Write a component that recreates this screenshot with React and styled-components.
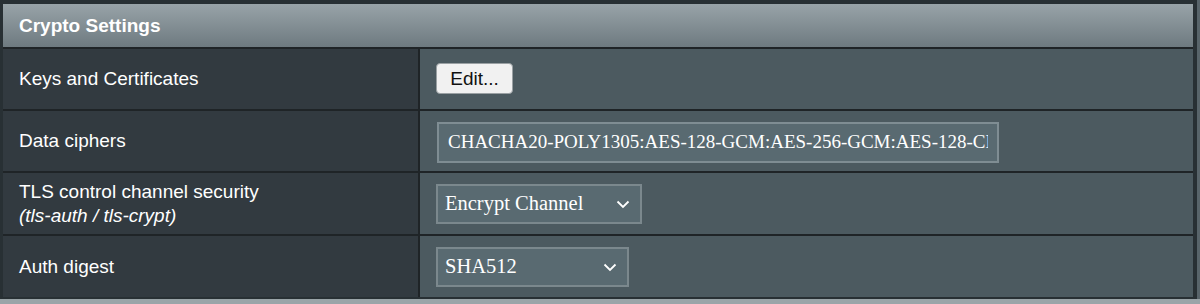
import styled, { createGlobalStyle } from 'styled-components';

const GlobalStyle = createGlobalStyle`
	html, body {
		margin: 0;
		padding: 0;
		background: #9aa4a8;
	}
	body {
		font-family: 'Liberation Sans', Arial, sans-serif;
	}
`;

const Frame = styled.div`
	width: 1200px;
	height: 304px;
	background: #9aa4a8;
	overflow: hidden;
`;

const Panel = styled.div`
	width: 1200px;
	padding: 4px 4px 2px 3px;
	box-sizing: border-box;
	background: #283034;
	border-right: 3px solid #58646a;
`;

const Table = styled.div`
	display: grid;
	grid-template-columns: 415px 1fr;
	row-gap: 2px;
	column-gap: 2px;
	background: #1f2427;
`;

const Header = styled.div`
	grid-column: 1 / -1;
	height: 43px;
	display: flex;
	align-items: center;
	padding-left: 16px;
	background: linear-gradient(#98a3a8, #6e7a80);
	color: #ffffff;
	font-weight: bold;
	font-size: 19px;
`;

const Label = styled.div`
	height: ${(props) => props.height || 60}px;
	display: flex;
	flex-direction: column;
	justify-content: center;
	padding-left: 16px;
	background: #323a40;
	color: #ffffff;
	font-size: 19px;
	line-height: 24px;
`;

const Hint = styled.span`
	font-style: italic;
`;

const Cell = styled.div`
	height: ${(props) => props.height || 60}px;
	display: flex;
	align-items: center;
	padding-left: 16px;
	background: #4c5a60;
`;

const Button = styled.button`
	height: 31px;
	width: 77px;
	padding: 0;
	margin-top: -1px;
	border: 1px solid #9aa0a3;
	border-radius: 4px;
	background: #f1f1f1;
	color: #111;
	font-family: 'Liberation Sans', Arial, sans-serif;
	font-size: 19px;
`;

const TextInput = styled.input`
	width: 562px;
	height: 41px;
	box-sizing: border-box;
	padding: 0 9px;
	margin-left: 1px;
	margin-top: 2px;
	border: 2px solid #7f8d93;
	background: #596a71;
	color: #ffffff;
	font-family: 'Liberation Serif', 'Times New Roman', serif;
	font-size: 19px;
	outline: none;
`;

const SelectBox = styled.div`
	position: relative;
	width: ${(props) => props.width}px;
	height: 40px;
	box-sizing: border-box;
	display: flex;
	align-items: center;
	padding-left: 7px;
	border: 2px solid #7b888d;
	background: #596a71;
	color: #ffffff;
	font-family: 'Liberation Serif', 'Times New Roman', serif;
	font-size: 20.5px;
`;

const Chevron = styled.svg`
	position: absolute;
	right: 10px;
	top: 50%;
	margin-top: -4px;
`;

const Select = ({ value, width }) => (
	<SelectBox width={width}>
		{value}
		<Chevron width='14' height='9' viewBox='0 0 14 9'>
			<path d='M1.5 1.5 L7 7 L12.5 1.5' fill='none' stroke='#ffffff' strokeWidth='1.8' />
		</Chevron>
	</SelectBox>
);

const App = () => (
	<Frame>
		<GlobalStyle />
		<Panel>
			<Table>
				<Header>Crypto Settings</Header>
				<Label>Keys and Certificates</Label>
				<Cell>
					<Button>Edit...</Button>
				</Cell>
				<Label>Data ciphers</Label>
				<Cell>
					<TextInput readOnly value='CHACHA20-POLY1305:AES-128-GCM:AES-256-GCM:AES-128-CBC' />
				</Cell>
				<Label height={61}>
					<span>TLS control channel security</span>
					<Hint>(tls-auth / tls-crypt)</Hint>
				</Label>
				<Cell height={61}>
					<Select value='Encrypt Channel' width={206} />
				</Cell>
				<Label height={61}>Auth digest</Label>
				<Cell height={61}>
					<Select value='SHA512' width={193} />
				</Cell>
			</Table>
		</Panel>
	</Frame>
);

export default App;
